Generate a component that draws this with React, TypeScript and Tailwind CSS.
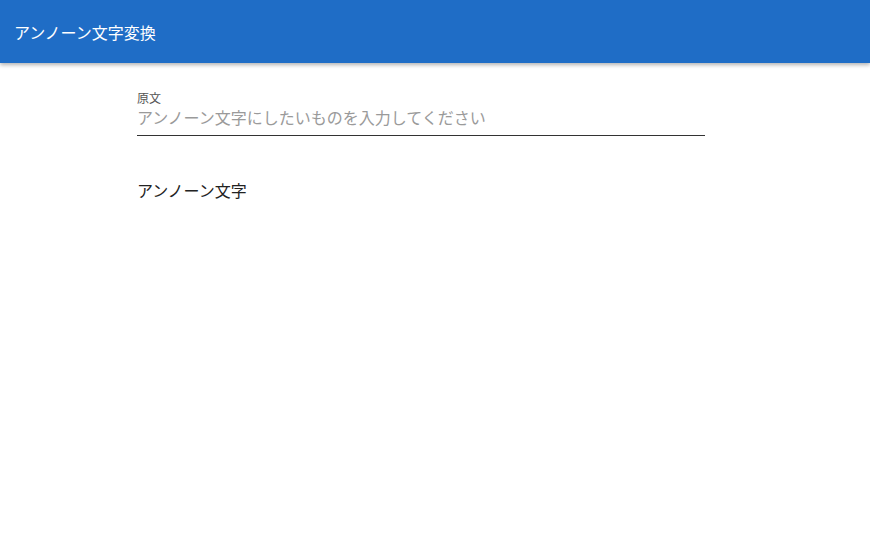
export default function App() {
  return (
    <div
      className="min-h-[556px] bg-white"
      style={{ fontFamily: '"Noto Sans CJK JP", "Noto Sans", sans-serif' }}
    >
      <header className="h-[63px] bg-[#1f6dc6] flex items-center px-[14px] shadow-[0_2px_4px_rgba(0,0,0,0.3)]">
        <h1 className="text-white text-[16px] leading-none">アンノーン文字変換</h1>
      </header>

      <main className="ml-[137px] w-[568px] pt-[28px]">
        <label className="block">
          <span className="block text-[12px] leading-[14px] text-[#555]">原文</span>
          <input
            className="w-full text-[16px] leading-[24px] pb-[6px] border-b border-[#333] outline-none placeholder:text-[#9a9a9a] text-[#222] bg-transparent"
            placeholder="アンノーン文字にしたいものを入力してください"
          />
        </label>

        <div className="mt-[42px] text-[16px] leading-[24px] text-[#222]">アンノーン文字</div>
      </main>
    </div>
  );
}
